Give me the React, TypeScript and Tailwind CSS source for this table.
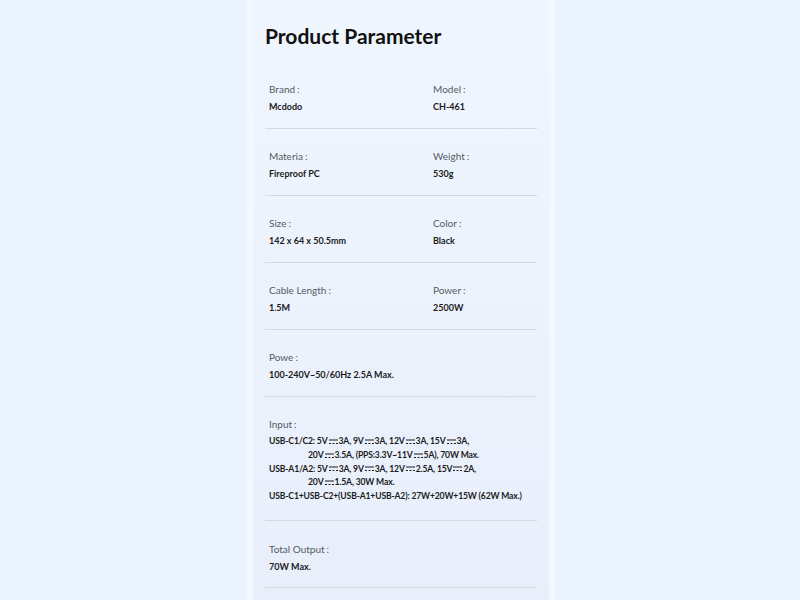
import React from 'react';

const specs: [string, string, string?, string?][] = [
  ['Brand', 'Mcdodo', 'Model', 'CH-461'],
  ['Materia', 'Fireproof PC', 'Weight', '530g'],
  ['Size', '142 x 64 x 50.5mm', 'Color', 'Black'],
  ['Cable Length', '1.5M', 'Power', '2500W'],
  ['Powe', '100-240V~50/60Hz 2.5A Max.'],
];

// DC symbol: solid line over dashed line
function Dc() {
  return (
    <svg width="9" height="6" viewBox="0 0 9 6" className="inline-block mx-[1px] align-middle">
      <line x1="0" y1="1" x2="9" y2="1" stroke="#1a1a1a" strokeWidth="1" />
      <line x1="0" y1="4.5" x2="9" y2="4.5" stroke="#1a1a1a" strokeWidth="1" strokeDasharray="2 1.5" />
    </svg>
  );
}

function Label({ text }: { text: string }) {
  return (
    <p className="text-[10px] leading-[14px] text-[#555b62]">
      {text}
      <span className="ml-[2px]">:</span>
    </p>
  );
}

function Value({ children }: { children: React.ReactNode }) {
  return <p className="mt-[4px] text-[9px] leading-[14px] font-bold text-[#1b1b1b]">{children}</p>;
}

export default function App() {
  return (
    <div className="w-full h-[600px] overflow-hidden bg-[#eaf3fe] flex justify-center" style={{ fontFamily: 'Lato, "Noto Sans", sans-serif' }}>
      <div className="w-[308px] h-full ml-[2px] bg-gradient-to-b from-[#f0f6fe] to-[#e8effb] border-l-[6px] border-r-[6px] border-[#f2f8ff] pl-[12px] pr-[12px]">
        <h1 className="pt-[22px] mb-[12px] text-[21px] leading-[28px] font-bold text-[#111111]">
          Product Parameter
        </h1>

        {specs.map(([l1, v1, l2, v2]) => (
          <div key={l1} className="h-[67px] border-b border-[#d3d9e1] pt-[20px] pl-[4px] grid grid-cols-[164px_1fr]">
            <div>
              <Label text={l1} />
              <Value>{v1}</Value>
            </div>
            {l2 && (
              <div>
                <Label text={l2} />
                <Value>{v2}</Value>
              </div>
            )}
          </div>
        ))}

        <div className="h-[124px] border-b border-[#d3d9e1] pt-[20px] pl-[4px]">
          <Label text="Input" />
          <div className="mt-[4px] text-[8.6px] leading-[13.75px] tracking-[-0.15px] font-bold text-[#1b1b1b] whitespace-nowrap">
            <p>USB-C1/C2: 5V<Dc />3A, 9V<Dc />3A, 12V<Dc />3A, 15V<Dc />3A,</p>
            <p className="pl-[39px]">20V<Dc />3.5A, (PPS:3.3V~11V<Dc />5A), 70W Max.</p>
            <p>USB-A1/A2: 5V<Dc />3A, 9V<Dc />3A, 12V<Dc />2.5A, 15V<Dc />2A,</p>
            <p className="pl-[39px]">20V<Dc />1.5A, 30W Max.</p>
            <p>USB-C1+USB-C2+(USB-A1+USB-A2): 27W+20W+15W (62W Max.)</p>
          </div>
        </div>

        <div className="h-[67px] border-b border-[#d3d9e1] pt-[21px] pl-[4px]">
          <Label text="Total Output" />
          <Value>70W Max.</Value>
        </div>
      </div>
    </div>
  );
}
